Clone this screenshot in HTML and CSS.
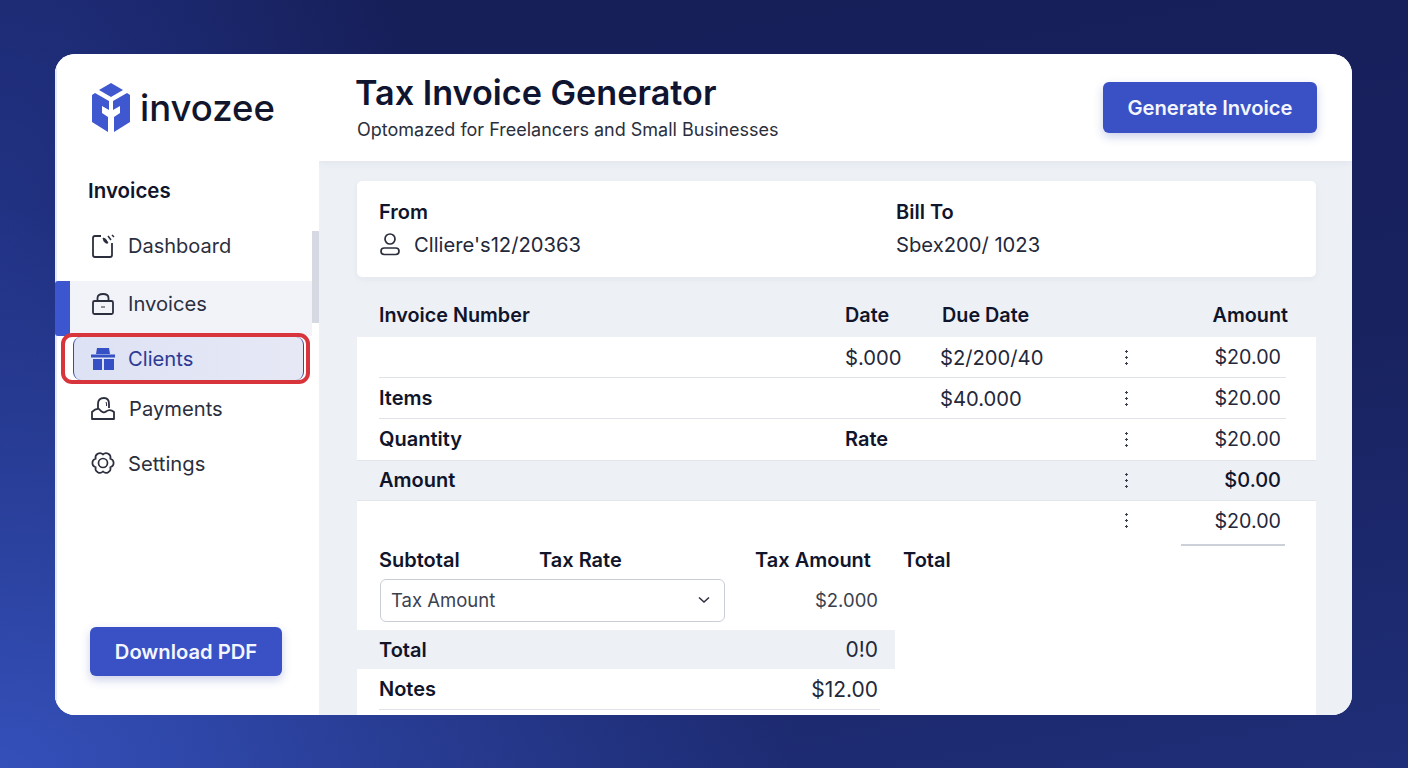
FILE: index.html
```html
<!DOCTYPE html>
<html lang="en">
<head>
    <meta charset="UTF-8">
    <meta name="viewport" content="width=device-width, initial-scale=1.0">
    <title>Tax Invoice Generator</title>
    <link rel="stylesheet" href="styles.css">
</head>
<body>
    <div class="app">
        <aside class="sidebar">
            <div class="logo">
                <svg class="logo-mark" viewBox="0 0 38 49" width="38" height="49" fill="#3f58cf">
                    <path d="M19 0 L31 7 L19 14 L7 7 Z"/>
                    <path d="M0 12 L3 10 L17 18 L17 27 L10 23 L10 30 L16 34 L16 49 L0 39 Z"/>
                    <path d="M38 12 L35 10 L21 18 L21 27 L28 23 L28 30 L22 34 L22 49 L38 39 Z"/>
                </svg>
                <span class="logo-text">invozee</span>
            </div>
            <div class="side-title">Invoices</div>
            <nav class="nav">
                <a class="nav-item nav-dashboard">
                    <svg class="nav-icon" viewBox="0 0 24 26" width="24" height="26" fill="none" stroke="#2b2f3d" stroke-width="1.800">
                        <path d="M10 3 H4 Q2 3 2 5 V22 Q2 24 4 24 H19 Q21 24 21 22 V10"/>
                        <path d="M12 5 Q15 5 17 10 Q13 11 12 5 Z" fill="#2b2f3d" stroke-width="1"/>
                        <path d="M17 3 L20 7 M21 2 L23 4" stroke-width="1.500"/>
                    </svg>
                    <span>Dashboard</span>
                </a>
                <a class="nav-item nav-current">
                    <svg class="nav-icon" viewBox="0 0 24 24" width="24" height="24" fill="none" stroke="#2b2f3d" stroke-width="1.800">
                        <rect x="2" y="9" width="20" height="13" rx="1.500"/>
                        <path d="M6.500 8 V6 Q6.500 2 12 2 Q17.500 2 17.500 6 V8"/>
                        <path d="M10 15 H14" stroke-width="1"/>
                    </svg>
                    <span>Invoices</span>
                </a>
                <div class="nav-ring">
                    <a class="nav-item nav-selected">
                        <svg class="nav-icon" viewBox="0 0 24 22" width="24" height="22" fill="#3450c4">
                            <path d="M6 0 H18 L19 6 H5 Z"/>
                            <rect x="0" y="6.500" width="24" height="3"/>
                            <rect x="2" y="11" width="9" height="11"/>
                            <rect x="13" y="11" width="10" height="11"/>
                        </svg>
                        <span>Clients</span>
                    </a>
                </div>
                <a class="nav-item nav-payments">
                    <svg class="nav-icon" viewBox="0 0 24 24" width="24" height="24" fill="none" stroke="#2b2f3d" stroke-width="1.800">
                        <path d="M7 13 V8 Q7 2 13 2 Q18 2 18 8 V12"/>
                        <path d="M15 6 Q16 8 15.500 10" stroke-width="1"/>
                        <path d="M1 16 Q5 12 8 13 Q12 18 15 15.500 Q19 12.500 23 16 V23 H1 Z" stroke-linejoin="round"/>
                    </svg>
                    <span>Payments</span>
                </a>
                <a class="nav-item nav-settings">
                    <svg class="nav-icon" viewBox="0 0 24 24" width="24" height="24" fill="none" stroke="#2b2f3d" stroke-width="1.700">
                        <circle cx="12" cy="12" r="4.500"/>
                        <path d="M19.360 7.750 A4.400 4.400 0 0 1 19.360 16.250 A4.400 4.400 0 0 1 12 20.500 A4.400 4.400 0 0 1 4.640 16.250 A4.400 4.400 0 0 1 4.640 7.750 A4.400 4.400 0 0 1 12 3.500 A4.400 4.400 0 0 1 19.360 7.750 Z"/>
                    </svg>
                    <span>Settings</span>
                </a>
            </nav>
            <button class="btn btn-download">Download PDF</button>
            <div class="side-thumb"></div>
        </aside>

        <div class="content">
            <header class="topbar">
                <div>
                    <h1>Tax Invoice Generator</h1>
                    <p class="subtitle">Optomazed for Freelancers and Small Businesses</p>
                </div>
                <button class="btn btn-generate">Generate Invoice</button>
            </header>

            <main class="main">
                <section class="parties">
                    <div class="party party-from">
                        <h3>From</h3>
                        <p>
                            <svg viewBox="0 0 22 24" width="22" height="24" fill="none" stroke="#2b2f3d" stroke-width="1.700">
                                <circle cx="11" cy="7" r="5"/>
                                <rect x="2" y="16" width="18" height="6.500" rx="3.250"/>
                            </svg>
                            <span>Clliere's12/20363</span>
                        </p>
                    </div>
                    <div class="party">
                        <h3>Bill To</h3>
                        <p>Sbex200/ 1023</p>
                    </div>
                </section>

                <div class="table-head">
                    <span>Invoice Number</span>
                    <span>Date</span>
                    <span>Due Date</span>
                    <span class="col-amount">Amount</span>
                </div>

                <section class="sheet">
                    <div class="row row-line">
                        <span></span>
                        <span>$.000</span>
                        <span class="val-due">$2/200/40</span>
                        <i class="kebab"></i>
                        <span class="col-amount">$20.00</span>
                    </div>
                    <div class="row row-line">
                        <b>Items</b>
                        <span></span>
                        <span class="val-due">$40.000</span>
                        <i class="kebab"></i>
                        <span class="col-amount">$20.00</span>
                    </div>
                    <div class="row">
                        <b>Quantity</b>
                        <b>Rate</b>
                        <span></span>
                        <i class="kebab"></i>
                        <span class="col-amount">$20.00</span>
                    </div>
                    <div class="row row-shaded">
                        <b>Amount</b>
                        <span></span>
                        <span></span>
                        <i class="kebab"></i>
                        <b class="col-amount">$0.00</b>
                    </div>
                    <div class="row row-last">
                        <span></span>
                        <span></span>
                        <span></span>
                        <i class="kebab"></i>
                        <span class="col-amount">$20.00</span>
                    </div>
                    <div class="sum-rule"></div>

                    <div class="tax-head">
                        <b>Subtotal</b>
                        <b>Tax Rate</b>
                        <b>Tax Amount</b>
                        <b>Total</b>
                    </div>
                    <div class="tax-select-row">
                        <div class="select">
                            <span>Tax Amount</span>
                            <svg viewBox="0 0 12 8" width="12" height="8" fill="none" stroke="#2b2f3d" stroke-width="1.500">
                                <path d="M1 1.500 L6 6 L11 1.500"/>
                            </svg>
                        </div>
                        <span class="tax-value">$2.000</span>
                    </div>
                    <div class="tax-total">
                        <b>Total</b>
                        <span>0!0</span>
                    </div>
                    <div class="tax-notes">
                        <b>Notes</b>
                        <span>$12.00</span>
                    </div>
                </section>
            </main>
        </div>
    </div>
</body>
</html>
```

FILE: styles.css
```css
* {
    box-sizing: border-box;
}

html,
body {
    height: 100%;
}

body {
    margin: 0;
    padding: 54px 56px 53px 55px;
    overflow: hidden;
    font-family: "Inter", "Liberation Sans", sans-serif;
    color: #10152b;
    background:
        radial-gradient(ellipse 800px 560px at 0% 100%, #3450ba 0%, rgba(52, 80, 186, 0) 100%),
        radial-gradient(ellipse 420px 760px at 0% 30%, rgba(38, 58, 150, 0.7) 0%, rgba(38, 58, 150, 0) 100%),
        linear-gradient(170deg, #161e57 0%, #18225f 55%, #1f2e78 100%);
}

.app {
    display: grid;
    grid-template-columns: 264px 1fr;
    height: 100%;
    background-color: #fff;
    border-radius: 20px;
    overflow: hidden;
}

/* sidebar */
.sidebar {
    position: relative;
    display: flex;
    flex-direction: column;
    background-color: #fff;
    box-shadow: inset 2px 0 0 #e4e9fd;
}

.logo {
    display: flex;
    align-items: center;
    gap: 10px;
    height: 49px;
    margin: 29px 0 0 37px;
}

.logo-text {
    font-size: 36.500px;
    font-weight: 500;
    color: #12162c;
}

.side-title {
    margin: 47px 0 0 33px;
    font-size: 20.500px;
    line-height: 24px;
    font-weight: 600;
}

.nav {
    display: flex;
    flex-direction: column;
    margin-top: 15px;
}

.nav-item {
    display: flex;
    align-items: center;
    gap: 13px;
    height: 54px;
    padding-left: 36px;
    font-size: 20.200px;
    color: #2b2f3d;
}

.nav-icon {
    flex: none;
}

.nav-dashboard {
    height: 55px;
    font-size: 20px;
}

.nav-current {
    height: 55px;
    margin-top: 8px;
    margin-right: 7px;
    padding-bottom: 10px;
    padding-left: 21px;
    border-left: 15px solid #3c56d0;
    border-radius: 3px 0 0 3px;
    background-color: #f1f3f9;
}

.nav-ring {
    width: 249px;
    height: 51px;
    margin: -3px 0 0 6px;
    padding: 0 2px 0 8px;
    border: 4px solid #d8343c;
    border-radius: 11px;
}

.nav-selected {
    height: 43px;
    padding-left: 17px;
    border: solid #3c4a9c;
    border-width: 0 1px;
    border-radius: 8px;
    color: #2d3a94;
    background: linear-gradient(90deg, #dde2f4, #e6e8f5);
}

.nav-payments {
    height: 50px;
    margin-top: -1px;
}

.nav-payments span {
    margin-left: 1px;
}

.nav-settings {
    margin-top: 3px;
}

.btn {
    border: none;
    border-radius: 6px;
    color: #f4f6ff;
    font-family: inherit;
    font-size: 20.200px;
    font-weight: 600;
    background-color: #3a51c6;
    box-shadow: 0 4px 10px rgba(50, 70, 170, 0.25);
}

.btn-download {
    width: 192px;
    height: 49px;
    margin: auto 0 39px 35px;
    padding: 0;
}

.side-thumb {
    position: absolute;
    top: 177px;
    right: 0;
    width: 7px;
    height: 92px;
    background-color: #d6d9e1;
}

/* header */
.content {
    display: flex;
    flex-direction: column;
    min-width: 0;
    overflow: hidden;
}

.topbar {
    position: relative;
    display: flex;
    justify-content: space-between;
    align-items: flex-start;
    flex: none;
    height: 107px;
    padding: 18px 35px 0 37px;
    background-color: #fff;
    box-shadow: 0 2px 8px rgba(30, 40, 80, 0.06);
}

h1 {
    margin: 0 0 0 -1px;
    font-size: 34.200px;
    line-height: 42px;
    font-weight: 600;
    color: #0f1430;
}

.subtitle {
    margin: 4px 0 0 1px;
    font-size: 18px;
    line-height: 24px;
    color: #2b2f3d;
}

.btn-generate {
    width: 214px;
    height: 51px;
    margin-top: 10px;
    padding: 0;
}

/* main area */
.main {
    flex: 1;
    min-height: 0;
    padding: 20px 36px 0 38px;
    overflow: hidden;
    background-color: #edf0f5;
}

.parties {
    display: grid;
    grid-template-columns: 517px 1fr;
    height: 96px;
    padding: 19px 21px 0 22px;
    border-radius: 5px;
    background-color: #fff;
    box-shadow: 0 2px 6px rgba(30, 40, 80, 0.05);
}

.party h3 {
    margin: 0;
    font-size: 20px;
    line-height: 24px;
    font-weight: 600;
}

.party p {
    display: flex;
    align-items: center;
    gap: 13px;
    height: 28px;
    margin: 6px 0 0;
    font-size: 20.200px;
    color: #23283a;
}

.party-from svg {
    flex: none;
}

.table-head,
.row {
    display: grid;
    grid-template-columns: 466px 97px 184px 1fr auto;
    align-items: center;
}

.table-head {
    grid-template-columns: 466px 97px 1fr auto;
    height: 60px;
    padding: 16px 28px 0 22px;
    font-size: 19.800px;
    font-weight: 600;
}

.sheet {
    height: 400px;
    background-color: #fff;
}

.row {
    height: 41px;
    margin: 0 30px 0 22px;
    padding-right: 5px;
    font-size: 20.200px;
    color: #23283a;
}

.row b,
.tax-head b,
.tax-total b,
.tax-notes b {
    font-size: 20px;
    font-weight: 600;
    color: #10152b;
}

.row-line {
    border-bottom: 1px solid #dfe2e8;
}

.row:not(.row-line) {
    padding-bottom: 1px;
}

.row-shaded {
    margin: 0;
    padding: 0 35px 1px 22px;
    border-top: 1px solid #e2e5ea;
    border-bottom: 1px solid #e2e5ea;
    background-color: #edf0f5;
}

.row-last {
    height: 40px;
}

.val-due {
    margin-left: -2px;
}

.col-amount {
    text-align: right;
}

.row span.col-amount {
    font-size: 19.700px;
}

.row b.col-amount {
    font-weight: 500;
}

.kebab {
    width: 3px;
    height: 15px;
    margin-left: -1px;
    background: radial-gradient(circle at 1.500px 1.500px, #3a3f4e 1px, transparent 1.400px) 0 0 / 3px 6px repeat-y;
}

.sum-rule {
    width: 104px;
    height: 2px;
    margin: 3px 0 0 824px;
    background-color: #cbd0d9;
}

.tax-head {
    display: grid;
    grid-template-columns: 160px 216px 148px auto;
    justify-content: start;
    align-items: center;
    height: 28px;
    margin-top: 0;
    padding-left: 22px;
}

.tax-select-row {
    display: flex;
    align-items: center;
    justify-content: space-between;
    width: 498px;
    margin: 5px 0 0 23px;
}

.select {
    display: flex;
    align-items: center;
    justify-content: space-between;
    width: 345px;
    height: 43px;
    padding: 0 14px 2px 10px;
    border: 1px solid #c9cdd5;
    border-radius: 6px;
    font-size: 18.500px;
    color: #3c4150;
}

.tax-value {
    margin-bottom: 2px;
    font-size: 18.500px;
    color: #3a3f4e;
}

.tax-total,
.tax-notes {
    display: flex;
    align-items: center;
    justify-content: space-between;
    font-size: 21px;
    color: #23283a;
}

.tax-total {
    width: 538px;
    height: 39px;
    margin-top: 8px;
    padding: 0 17px 0 22px;
    background-color: #edf0f5;
}

.tax-notes {
    width: 501px;
    height: 41px;
    margin-left: 22px;
    padding-right: 2px;
    border-bottom: 1px solid #dfe2e8;
}
```
